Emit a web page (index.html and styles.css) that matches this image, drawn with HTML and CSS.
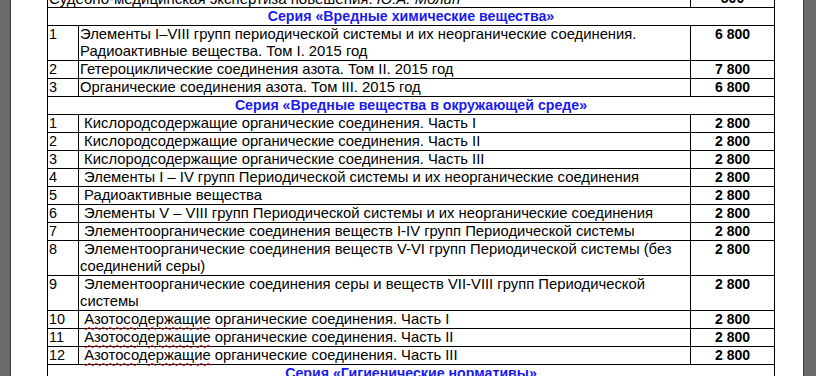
FILE: index.html
```html
<!DOCTYPE html>
<html lang="ru">
<head>
<meta charset="utf-8">
<title>Прайс-лист</title>
<link rel="stylesheet" href="styles.css">
</head>
<body>
<div class="page">
  <table class="list">
    <colgroup><col class="c-num"><col class="c-title"><col class="c-price"></colgroup>
    <tbody>
      <tr><td colspan="2" class="title lead">Судебно-медицинская экспертиза повешения. <i>Ю.А. Молин</i></td><td class="price">500</td></tr>
      <tr class="series"><td colspan="3">Серия «Вредные химические вещества»</td></tr>
      <tr><td class="num">1</td><td class="title">Элементы I–VIII групп периодической системы и их неорганические соединения. Радиоактивные вещества. Том I. 2015 год</td><td class="price">6 800</td></tr>
      <tr><td class="num">2</td><td class="title">Гетероциклические соединения азота. Том II. 2015 год</td><td class="price">7 800</td></tr>
      <tr><td class="num">3</td><td class="title">Органические соединения азота. Том III. 2015 год</td><td class="price">6 800</td></tr>
      <tr class="series"><td colspan="3">Серия «Вредные вещества в окружающей среде»</td></tr>
      <tr><td class="num">1</td><td class="title">&nbsp;Кислородсодержащие органические соединения. Часть I</td><td class="price">2 800</td></tr>
      <tr><td class="num">2</td><td class="title">&nbsp;Кислородсодержащие органические соединения. Часть II</td><td class="price">2 800</td></tr>
      <tr><td class="num">3</td><td class="title">&nbsp;Кислородсодержащие органические соединения. Часть III</td><td class="price">2 800</td></tr>
      <tr><td class="num">4</td><td class="title">&nbsp;Элементы I – IV групп Периодической системы и их неорганические соединения</td><td class="price">2 800</td></tr>
      <tr><td class="num">5</td><td class="title">&nbsp;Радиоактивные вещества</td><td class="price">2 800</td></tr>
      <tr><td class="num">6</td><td class="title">&nbsp;Элементы V – VIII групп Периодической системы и их неорганические соединения</td><td class="price">2 800</td></tr>
      <tr><td class="num">7</td><td class="title">&nbsp;Элементоорганические соединения веществ I-IV групп Периодической системы</td><td class="price">2 800</td></tr>
      <tr><td class="num">8</td><td class="title">&nbsp;Элементоорганические соединения веществ V-VI групп Периодической системы (без соединений серы)</td><td class="price">2 800</td></tr>
      <tr><td class="num">9</td><td class="title">&nbsp;Элементоорганические соединения серы и веществ VII-VIII групп Периодической системы</td><td class="price">2 800</td></tr>
      <tr><td class="num">10</td><td class="title">&nbsp;<span class="spell">Азотосодержащие</span> органические соединения. Часть I</td><td class="price">2 800</td></tr>
      <tr><td class="num">11</td><td class="title">&nbsp;<span class="spell">Азотосодержащие</span> органические соединения. Часть II</td><td class="price">2 800</td></tr>
      <tr><td class="num">12</td><td class="title">&nbsp;<span class="spell">Азотосодержащие</span> органические соединения. Часть III</td><td class="price">2 800</td></tr>
      <tr class="series"><td colspan="3">Серия «Гигиенические нормативы»</td></tr>
    </tbody>
  </table>
</div>
</body>
</html>
```
FILE: styles.css
```css
html, body {
  margin: 0;
  padding: 0;
  background: #6b6b6b;
  overflow: hidden;
}
body {
  padding-left: 10px;
  font-family: "Liberation Sans", Arial, sans-serif;
  font-size: 14.8px;
  color: #000;
}
.page {
  width: 794px;
  min-height: 400px;
  background: #fff;
  border-left: 1px solid #3a3a3a;
  border-right: 1px solid #3a3a3a;
  padding: 0 28px 0 36px;
  box-sizing: border-box;
}
.list {
  margin-top: -11px;
  width: 728px;
  border-collapse: collapse;
  table-layout: fixed;
}
.c-num { width: 31px; }
.c-price { width: 84px; }
.list td {
  border: 1px solid #000;
  padding: 0 1px;
  line-height: 17px;
  vertical-align: top;
}
.list td.lead {
  font-size: 15px;
}
.list td.num {
  font-size: 14.4px;
}
.list td.price {
  text-align: center;
  font-weight: bold;
  font-size: 14px;
}
.series td {
  text-align: center;
  font-weight: bold;
  font-size: 14.2px;
  color: #1a1aee;
}
.spell {
  text-decoration: underline wavy #e02020;
  text-decoration-thickness: 1px;
  text-underline-offset: 2px;
}
```
